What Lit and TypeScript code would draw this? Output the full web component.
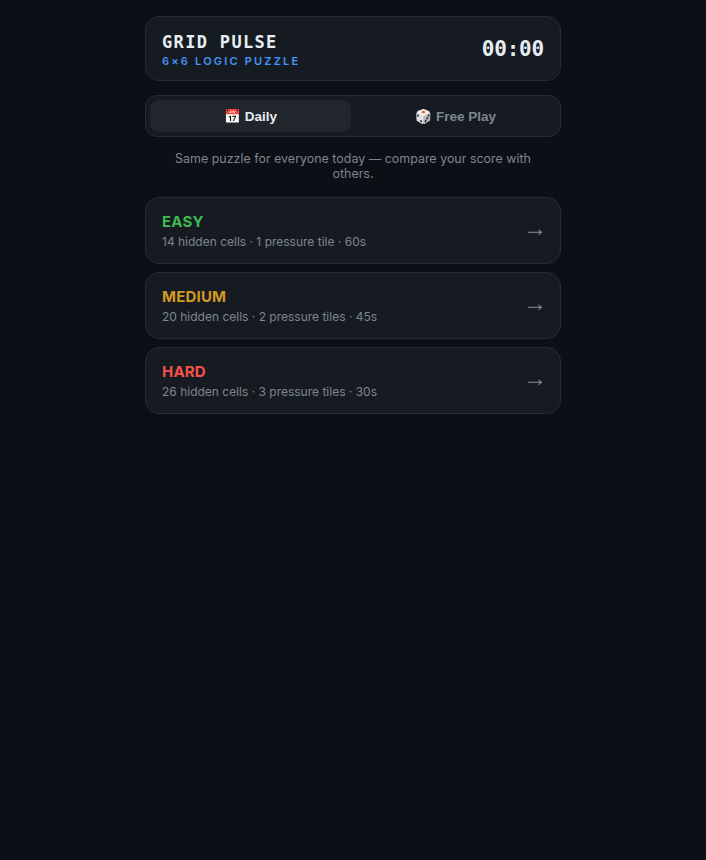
import { LitElement, html, css } from 'lit';
import { customElement } from 'lit/decorators.js';

const LEVELS = [
  { name: 'EASY', cls: 'easy', info: '14 hidden cells · 1 pressure tile · 60s' },
  { name: 'MEDIUM', cls: 'medium', info: '20 hidden cells · 2 pressure tiles · 45s' },
  { name: 'HARD', cls: 'hard', info: '26 hidden cells · 3 pressure tiles · 30s' },
];

@customElement('app-root')
export class AppRoot extends LitElement {
  static override styles = css`
    :host {
      display: block;
      min-height: 860px;
      background: #0c0f16;
      font-family: Inter, 'Noto Sans', sans-serif;
      color: #e6edf3;
    }

    .page {
      width: 416px;
      margin: 0 auto;
      padding-top: 16px;
      display: flex;
      flex-direction: column;
    }

    .header {
      box-sizing: border-box;
      height: 65px;
      padding: 0 16px;
      display: flex;
      align-items: center;
      justify-content: space-between;
      background: #161b22;
      border: 1px solid #262b33;
      border-radius: 14px;
    }

    .brand {
      padding-top: 1px;
    }

    .title {
      font-family: 'DejaVu Sans Mono', monospace;
      font-size: 17px;
      font-weight: 700;
      line-height: 22px;
      letter-spacing: 1.33px;
    }

    .subtitle {
      margin-top: 2px;
      font-size: 11px;
      font-weight: 600;
      line-height: 13px;
      letter-spacing: 2.2px;
      color: #4493f8;
    }

    .clock {
      font-family: 'DejaVu Sans Mono', monospace;
      font-size: 21px;
      font-weight: 700;
      letter-spacing: -0.2px;
      color: #e6edf3;
    }

    .tabs {
      box-sizing: border-box;
      height: 42px;
      margin-top: 14px;
      padding: 4px;
      display: flex;
      gap: 4px;
      background: #161b22;
      border: 1px solid #262b33;
      border-radius: 12px;
    }

    .tab {
      flex: 1;
      display: flex;
      align-items: center;
      justify-content: center;
      gap: 4px;
      border-radius: 9px;
      font-family: 'Liberation Sans', sans-serif;
      font-size: 13.5px;
      font-weight: 700;
      color: #7d8590;
    }

    .tab.active {
      background: #21262d;
      color: #e6edf3;
    }

    .note {
      margin: 14px 0 16px;
      padding: 0 16px;
      font-size: 12.46px;
      line-height: 15px;
      text-align: center;
      color: #7d8590;
    }

    .levels {
      display: flex;
      flex-direction: column;
      gap: 8px;
    }

    .level {
      box-sizing: border-box;
      height: 67px;
      padding: 0 16px;
      display: flex;
      align-items: center;
      justify-content: space-between;
      background: #161b22;
      border: 1px solid #262b33;
      border-radius: 14px;
    }

    .name {
      font-size: 15px;
      font-weight: 700;
      line-height: 18px;
      letter-spacing: 0.2px;
    }

    .easy { color: #3fb950; }
    .medium { color: #d29922; }
    .hard { color: #f85149; }

    .info {
      margin-top: 3px;
      font-size: 12px;
      line-height: 15px;
      color: #7d8590;
    }

    .arrow {
      margin: 0 -3px 6px 0;
      font-family: 'Liberation Sans', sans-serif;
      font-size: 24px;
      line-height: 1;
      color: #7d8590;
    }
  `;

  override render() {
    return html`
      <div class="page">
        <div class="header">
          <div class="brand">
            <div class="title">GRID PULSE</div>
            <div class="subtitle">6×6 LOGIC PUZZLE</div>
          </div>
          <div class="clock">00:00</div>
        </div>
        <div class="tabs">
          <div class="tab active"><span>📅</span><span>Daily</span></div>
          <div class="tab"><span>🎲</span><span>Free Play</span></div>
        </div>
        <div class="note">Same puzzle for everyone today — compare your score with others.</div>
        <div class="levels">
          ${LEVELS.map(
            (l) => html`
              <div class="level">
                <div>
                  <div class="name ${l.cls}">${l.name}</div>
                  <div class="info">${l.info}</div>
                </div>
                <div class="arrow">→</div>
              </div>
            `
          )}
        </div>
      </div>
    `;
  }
}
